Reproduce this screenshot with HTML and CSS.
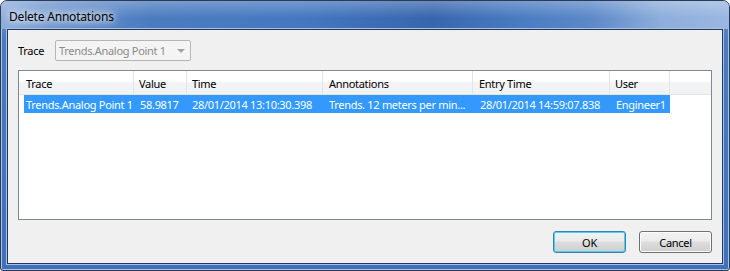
FILE: index.html
```html
<!DOCTYPE html>
<html>
<head>
    <meta charset="UTF-8">
    <title>Delete Annotations</title>
    <link rel="stylesheet" href="styles.css">
</head>
<body>
    <div class="window">
        <div class="titlebar"><span class="title">Delete Annotations</span></div>
        <div class="client">
            <div class="filter">
                <label class="filter-label">Trace</label>
                <div class="combo">
                    <span class="combo-text">Trends.Analog Point 1</span>
                    <span class="combo-arrow"></span>
                </div>
            </div>
            <div class="list">
                <div class="list-header">
                    <div class="hcell c1">Trace</div>
                    <div class="hcell c2">Value</div>
                    <div class="hcell c3">Time</div>
                    <div class="hcell c4">Annotations</div>
                    <div class="hcell c5">Entry Time</div>
                    <div class="hcell c6">User</div>
                    <div class="hcell rest"></div>
                </div>
                <div class="list-row selected">
                    <div class="cell c1">Trends.Analog Point 1</div>
                    <div class="cell c2">58.9817</div>
                    <div class="cell c3">28/01/2014 13:10:30.398</div>
                    <div class="cell c4">Trends. 12 meters per min...</div>
                    <div class="cell c5">28/01/2014 14:59:07.838</div>
                    <div class="cell c6">Engineer1</div>
                </div>
            </div>
            <div class="buttons">
                <button type="button" class="btn default">OK</button>
                <button type="button" class="btn">Cancel</button>
            </div>
        </div>
    </div>
</body>
</html>
```

FILE: styles.css
```css
html, body {
    margin: 0;
    padding: 0;
    background-color: #FFFFFF;
}
body {
    font-family: "Noto Sans", "Open Sans", sans-serif;
    font-size: 11px;
    letter-spacing: -0.3px;
    color: #000000;
}
.window {
    box-sizing: border-box;
    width: 730px;
    height: 271px;
    border: 1px solid #2a3b55;
    border-radius: 7px 7px 3px 3px;
    padding: 0 6px 6px 6px;
    /* Aero basic frame blue */
    background: linear-gradient(to bottom, #6f95cc 0px, #4a7bc0 40px, #3f71b9 100%);
    box-shadow: inset 0 0 0 1px #a9c1e5;
    display: flex;
    flex-direction: column;
}
.titlebar {
    height: 28px;
    margin: 0 -6px;
    padding-left: 8px;
    border-radius: 6px 6px 0 0;
    background:
        linear-gradient(to bottom, rgba(255,255,255,0.25), rgba(255,255,255,0) 60%),
        linear-gradient(to right, #8eaedb 0px, #6892cc 60px, #4b7cc0 150px, #4578bf 300px,
            #3766ad 430px, #4a7cc2 520px, #5c89c8 590px, #8eaedb 660px, #9ab7e1 730px);
    display: flex;
    align-items: center;
}
.title {
    font-size: 12px;
    letter-spacing: -0.2px;
    padding-top: 2px;
    color: #000000;
    text-shadow: 0 0 6px #FFFFFF, 0 0 10px rgba(255,255,255,0.9), 0 0 14px rgba(255,255,255,0.7);
}
.client {
    box-sizing: border-box;
    height: 235px;
    background-color: #F0F0F0;
    border: 1px solid #22395b;
    box-shadow: 0 0 0 1px #a7c0e4;
    padding: 10px 10px 10px 10px;
    display: flex;
    flex-direction: column;
}
.filter {
    display: flex;
    align-items: center;
    height: 21px;
}
.filter-label {
    width: 37px;
    padding-top: 0;
}
.combo {
    box-sizing: border-box;
    width: 136px;
    height: 21px;
    border: 1px solid #b5b5b5;
    border-radius: 2px;
    background-color: #F4F4F4;
    color: #8a8a8a;
    display: flex;
    align-items: center;
    justify-content: space-between;
    padding: 0 5px 0 3px;
}
.combo-arrow {
    width: 0;
    height: 0;
    border-left: 4px solid transparent;
    border-right: 4px solid transparent;
    border-top: 4px solid #a3a3a3;
}
.list {
    box-sizing: border-box;
    margin-top: 9px;
    height: 150px;
    border: 1px solid #828790;
    background-color: #FFFFFF;
}
.list-header {
    display: flex;
    height: 24px;
    box-sizing: border-box;
    border-bottom: 1px solid #e5e5e5;
    background: linear-gradient(to bottom, #FFFFFF 0%, #FFFFFF 45%, #f3f4f6 50%, #f1f2f4 100%);
}
.hcell {
    box-sizing: border-box;
    border-right: 1px solid #e3e4e6;
    padding: 5px 0 0 5px;
    white-space: nowrap;
    overflow: hidden;
}
.hcell.c1 { width: 115px; padding-left: 7px; }
.hcell.c2 { width: 53px; }
.hcell.c3 { width: 136px; }
.hcell.c4 { width: 150px; padding-left: 6px; }
.hcell.c5 { width: 137px; padding-left: 6px; }
.hcell.c6 { width: 60px; }
.hcell.rest { flex: 1; border-right: none; }
.list-row {
    display: flex;
    height: 18px;
    margin-left: 5px;
    width: 646px;
}
.list-row.selected {
    background-color: #3399FF;
    color: #FFFFFF;
}
.cell {
    box-sizing: border-box;
    padding: 2px 0 0 6px;
    white-space: nowrap;
    overflow: hidden;
}
.cell.c1 { width: 110px; padding-left: 2px; }
.cell.c2 { width: 53px; }
.cell.c3 { width: 136px; padding-left: 5px; }
.cell.c4 { width: 150px; }
.cell.c5 { width: 137px; padding-left: 7px; }
.cell.c6 { width: 60px; }
.buttons {
    display: flex;
    justify-content: flex-end;
    gap: 13px;
    margin-top: 11px;
}
.btn {
    box-sizing: border-box;
    width: 73px;
    height: 22px;
    font-family: "Noto Sans", "Open Sans", sans-serif;
    font-size: 11px;
    letter-spacing: -0.3px;
    color: #000000;
    border: 1px solid #707070;
    border-radius: 3px;
    background: linear-gradient(to bottom, #f2f2f2 0%, #ebebeb 45%, #dddddd 50%, #cfcfcf 100%);
    box-shadow: inset 0 0 0 1px #fcfcfc;
    padding: 0;
}
.btn.default {
    border-color: #3c7fb1;
    box-shadow: inset 0 0 0 1px #48d0f8;
}
```
